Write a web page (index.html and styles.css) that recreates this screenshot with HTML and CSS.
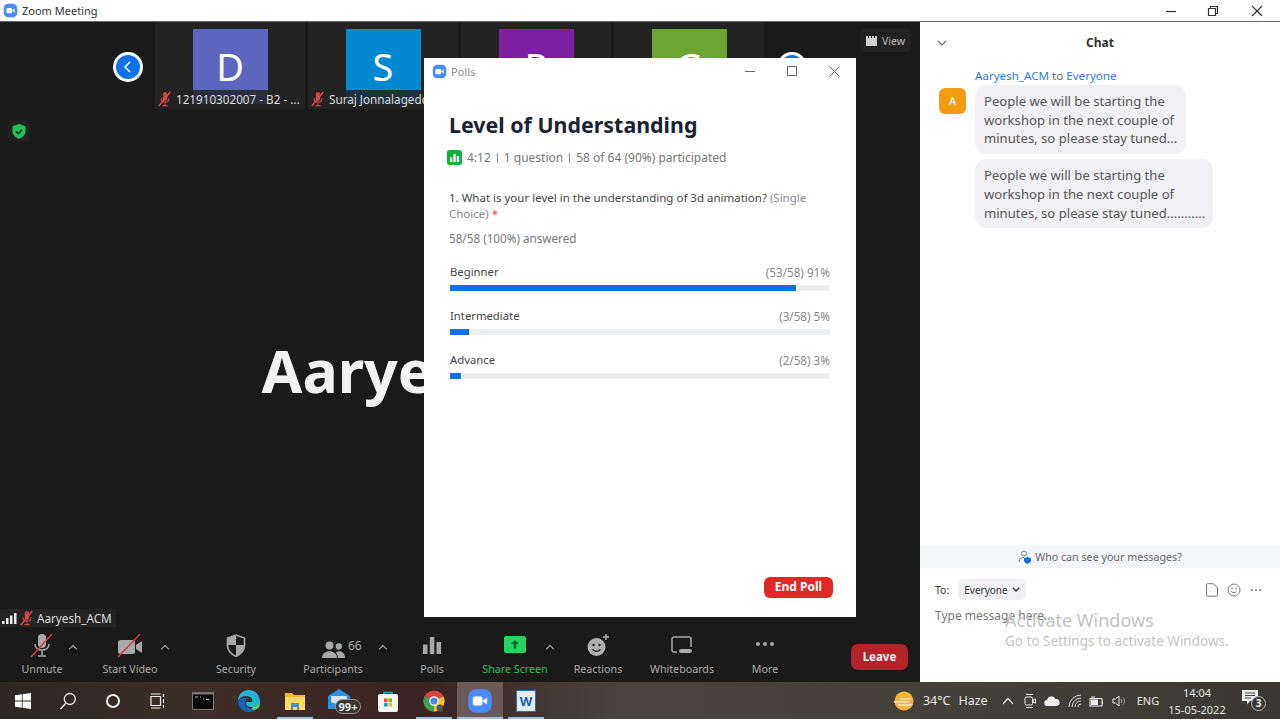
FILE: index.html
```html
<!DOCTYPE html>
<html lang="en">
<head>
  <meta charset="UTF-8">
  <title>Zoom Meeting</title>
  <link rel="stylesheet" href="styles.css">
</head>
<body>
  <svg class="defs" width="0" height="0">
    <symbol id="mutedmic" viewBox="0 0 16 18">
      <rect x="5.5" y="1" width="5" height="10" rx="2.5" fill="#c44"/>
      <path d="M3.5 8c0 6 9 6 9 0M8 13v3M5 16.5h6" fill="none" stroke="#c44" stroke-width="1.3"/>
      <path d="M1 17L14 1" stroke="#e5484d" stroke-width="1.5"/>
    </symbol>
    <symbol id="zoomlogo" viewBox="0 0 20 20">
      <rect x="1" y="1" width="18" height="18" rx="6" fill="#4a8cff"/>
      <rect x="4.5" y="6.5" width="7.5" height="7" rx="1.5" fill="#fff"/>
      <path d="M12.5 9.5l3-2.2v5.4l-3-2.2z" fill="#fff"/>
    </symbol>
  </svg>

  <div class="app">
    <div class="titlebar">
      <svg class="title-logo" width="15" height="15"><use href="#zoomlogo"/></svg>
      <span class="title-text">Zoom Meeting</span>
      <div class="win-controls">
        <svg width="42" height="20" viewBox="0 0 42 20"><path d="M16 10.500h10" stroke="#333" stroke-width="1.200"/></svg>
        <svg width="42" height="20" viewBox="0 0 42 20"><path d="M16.500 7.500h7v7h-7zM18.500 7.500v-2h7v7h-2" fill="none" stroke="#333" stroke-width="1.200"/></svg>
        <svg width="46" height="20" viewBox="0 0 46 20"><path d="M18 5l10 10M28 5l-10 10" stroke="#333" stroke-width="1.200"/></svg>
      </div>
    </div>

    <div class="main">
      <div class="meeting">
        <div class="stage">
          <div class="gallery">
            <div class="nav-btn"><svg width="14" height="14" viewBox="0 0 14 14"><path d="M9 2L4 7l5 5" fill="none" stroke="#fff" stroke-width="1.600"/></svg></div>
            <div class="tile">
              <div class="avatar av-blue">D</div>
              <div class="tile-label"><svg width="14" height="16"><use href="#mutedmic"/></svg><span>121910302007 - B2 - ...</span></div>
            </div>
            <div class="tile">
              <div class="avatar av-sky">S</div>
              <div class="tile-label"><svg width="14" height="16"><use href="#mutedmic"/></svg><span>Suraj Jonnalagedda</span></div>
            </div>
            <div class="tile">
              <div class="avatar av-purple">P</div>
            </div>
            <div class="tile">
              <div class="avatar av-green">G</div>
            </div>
            <div class="nav-btn nav-next"></div>
            <div class="view-btn">
              <svg width="11" height="10" viewBox="0 0 11 10"><path d="M0 0h2v2h1V0h2v2h1V0h2v2h1V0h2v10H0z" fill="#d0d0d0"/></svg>
              <span>View</span>
            </div>
          </div>

          <div class="speaker">Aaryesh_ACM</div>

          <div class="speaker-label">
            <svg width="15" height="11" viewBox="0 0 15 11"><path d="M0 8h2.500v3H0zM4 5h2.500v6H4zM8 2.500h2.500V11H8zM12 0h2.500v11H12z" fill="#eee"/></svg>
            <svg width="14" height="16"><use href="#mutedmic"/></svg>
            <span>Aaryesh_ACM</span>
          </div>

          <div class="secure-badge">
            <svg width="14" height="15" viewBox="0 0 14 15"><path d="M7 0l6.500 2.300v5c0 3.500-2.800 6.200-6.500 7.700C3.300 13.500.5 10.800.5 7.300v-5z" fill="#1fc257"/><path d="M4 7.500l2.200 2.200L10 5.800" fill="none" stroke="#123" stroke-width="1.500"/></svg>
          </div>
        </div>

        <div class="toolbar">
          <div class="tool tool-unmute">
            <svg width="28" height="26" viewBox="0 0 28 26">
              <rect x="10" y="1" width="8" height="14" rx="4" fill="#a8a8a8"/>
              <path d="M7 11c0 8 14 8 14 0M14 18v4M10 23h8" fill="none" stroke="#a8a8a8" stroke-width="1.600"/>
              <path d="M3 24L24 1" stroke="#c9403f" stroke-width="1.600"/>
            </svg>
            <span>Unmute</span>
            <i class="caret"></i>
          </div>
          <div class="tool tool-video">
            <svg width="28" height="26" viewBox="0 0 28 26">
              <rect x="2" y="7" width="17" height="14" rx="2.500" fill="#a8a8a8"/>
              <path d="M20 12l6-4v12l-6-4z" fill="#a8a8a8"/>
              <path d="M2 24L24 1" stroke="#c9403f" stroke-width="1.600"/>
            </svg>
            <span>Start Video</span>
            <i class="caret"></i>
          </div>
          <div class="tool tool-security">
            <svg width="28" height="26" viewBox="0 0 28 26">
              <path d="M14 2l8.500 3v7c0 5.500-3.500 9-8.500 11.500C9 21 5.500 17.500 5.500 12V5z" fill="none" stroke="#a8a8a8" stroke-width="1.600"/>
              <path d="M14 2v10H5.500V5zM14 12h8.500c0 5.500-3.500 9-8.500 11.500z" fill="#a8a8a8"/>
            </svg>
            <span>Security</span>
          </div>
          <div class="tool tool-people">
            <svg class="people-icon" width="23" height="18" viewBox="0 0 26 20">
              <circle cx="8.500" cy="5" r="4.500" fill="#a8a8a8"/>
              <circle cx="19" cy="6" r="3.500" fill="#a8a8a8"/>
              <path d="M0 19c0-10 17-10 17 0zM18 19c0-3-1-5-2.500-6.500C20 10 26 12 26 19z" fill="#a8a8a8"/>
            </svg>
            <b class="people-count">66</b>
            <span>Participants</span>
            <i class="caret"></i>
          </div>
          <div class="tool tool-polls">
            <svg width="28" height="26" viewBox="0 0 28 26">
              <path d="M5 11.500h4.500V21H5zM11.800 4h4.500v17h-4.500zM18.500 9h4.500v12h-4.500z" fill="#a8a8a8"/>
            </svg>
            <span>Polls</span>
          </div>
          <div class="tool tool-share">
            <svg width="28" height="26" viewBox="0 0 28 26">
              <rect x="3" y="3" width="22" height="17" rx="2" fill="#25d45f"/>
              <path d="M14 7l-4 4h2.700v4.500h2.600V11H18z" fill="#063"/>
            </svg>
            <span>Share Screen</span>
            <i class="caret"></i>
          </div>
          <div class="tool tool-reactions">
            <svg width="28" height="26" viewBox="0 0 28 26">
              <circle cx="12.500" cy="14" r="9" fill="#b0b0b0"/>
              <circle cx="9.500" cy="12" r="1.200" fill="#222"/><circle cx="15.500" cy="12" r="1.200" fill="#222"/>
              <path d="M8.500 16c1.500 3 6.500 3 8 0" fill="none" stroke="#222" stroke-width="1.300"/>
              <path d="M22 1v6M19 4h6" stroke="#b0b0b0" stroke-width="1.400"/>
            </svg>
            <span>Reactions</span>
          </div>
          <div class="tool tool-boards">
            <svg width="28" height="26" viewBox="0 0 28 26">
              <path d="M9 19H6a2 2 0 0 1-2-2V6a2 2 0 0 1 2-2h15a2 2 0 0 1 2 2v8" fill="none" stroke="#a8a8a8" stroke-width="1.500"/>
              <rect x="11" y="16" width="13" height="4" rx="2" fill="#a8a8a8"/>
            </svg>
            <span>Whiteboards</span>
          </div>
          <div class="tool tool-more">
            <svg width="28" height="26" viewBox="0 0 28 26">
              <circle cx="7" cy="11" r="2" fill="#a8a8a8"/><circle cx="14" cy="11" r="2" fill="#a8a8a8"/><circle cx="21" cy="11" r="2" fill="#a8a8a8"/>
            </svg>
            <span>More</span>
          </div>
          <div class="leave-btn">Leave</div>
        </div>
      </div>

      <div class="chat">
        <div class="chat-head">
          <svg class="chat-chevron" width="10" height="6" viewBox="0 0 10 6"><path d="M1 1l4 4 4-4" fill="none" stroke="#666" stroke-width="1.200"/></svg>
          <b>Chat</b>
        </div>
        <div class="chat-body">
          <div class="sender"><span class="blue">Aaryesh_ACM</span> to <span class="blue">Everyone</span></div>
          <div class="msg-row">
            <div class="chat-avatar">A</div>
            <div class="bubbles">
              <div class="bubble">People we will be starting the<br>workshop in the next couple of<br>minutes, so please stay tuned...</div>
              <div class="bubble">People we will be starting the<br>workshop in the next couple of<br>minutes, so please stay tuned...........</div>
            </div>
          </div>
        </div>
        <div class="who-can">
          <svg width="14" height="14" viewBox="0 0 14 14">
            <circle cx="6" cy="3.500" r="2.500" fill="none" stroke="#777"/>
            <path d="M1 12c0-3 2-4.500 5-4.500" fill="none" stroke="#777"/>
            <path d="M9.500 7l3.500 1.200v2.300c0 1.500-1.500 2.800-3.500 3.500C7.500 13.300 6 12 6 10.500V8.200z" fill="#0e71eb"/>
          </svg>
          <span>Who can see your messages?</span>
        </div>
        <div class="compose">
          <div class="to-row">
            <span class="to-label">To:</span>
            <div class="to-select">Everyone
              <svg width="8" height="5" viewBox="0 0 8 5"><path d="M.8.8L4 4 7.200.8" fill="none" stroke="#333" stroke-width="1.300"/></svg>
            </div>
            <div class="compose-icons">
              <svg width="12" height="14" viewBox="0 0 12 14"><path d="M1.500.7h6l4 4v7a1.500 1.500 0 0 1-1.500 1.500H2A1.500 1.500 0 0 1 .5 11.700V2A1.500 1.500 0 0 1 1.500.7z" fill="none" stroke="#777"/></svg>
              <svg width="14" height="14" viewBox="0 0 14 14"><circle cx="7" cy="7" r="6" fill="none" stroke="#777"/><circle cx="5" cy="5.800" r=".8" fill="#777"/><circle cx="9" cy="5.800" r=".8" fill="#777"/><path d="M4.500 8.500c1 1.500 4 1.500 5 0" fill="none" stroke="#777"/></svg>
              <svg width="12" height="14" viewBox="0 0 12 14"><circle cx="2" cy="7" r="1" fill="#777"/><circle cx="6" cy="7" r="1" fill="#777"/><circle cx="10" cy="7" r="1" fill="#777"/></svg>
            </div>
          </div>
          <div class="type-here">Type message here...</div>
        </div>
        <div class="watermark">
          <div class="wm-big">Activate Windows</div>
          <div class="wm-small">Go to Settings to activate Windows.</div>
        </div>
      </div>
    </div>

    <div class="taskbar">
      <div class="task-slot slot-sm">
        <svg width="16" height="16" viewBox="0 0 16 16"><path d="M0 2.300l6.800-1v6.300H0zM7.600 1.200L16 0v7.600H7.600zM0 8.400h6.800v6.300l-6.800-1zM7.600 8.400H16V16l-8.400-1.200z" fill="#fff"/></svg>
      </div>
      <div class="task-slot slot-sm">
        <svg width="18" height="18" viewBox="0 0 18 18"><circle cx="10.800" cy="7" r="5.500" fill="none" stroke="#eee" stroke-width="1.300"/><path d="M7 11L1.500 17" stroke="#eee" stroke-width="1.400"/></svg>
      </div>
      <div class="task-slot slot-sm">
        <svg width="16" height="16" viewBox="0 0 16 16"><circle cx="8" cy="8" r="6" fill="none" stroke="#eee" stroke-width="2"/></svg>
      </div>
      <div class="task-slot slot-sm">
        <svg width="16" height="16" viewBox="0 0 16 16"><path d="M1 3.500h9.500v9H1zM1 1h9.500M1 15h9.500M13.500 1v3M13.500 6v4M13.500 12v3" fill="none" stroke="#eee" stroke-width="1.200"/></svg>
      </div>
      <div class="task-slot">
        <svg width="22" height="18" viewBox="0 0 22 18"><rect width="22" height="18" fill="#777"/><rect x="1" y="2.500" width="20" height="14.500" fill="#0a0a0a"/><path d="M3 5h3M8 5h1M12 7l-1 .5M14 7.500h3" stroke="#bbb"/></svg>
      </div>
      <div class="task-slot">
        <svg width="24" height="24" viewBox="0 0 24 24">
          <path d="M23 13C23 6 18 1 12 1 5 1 1 6 1 12c2-5 8-6 12-4 2 1 3 3 2 5h-3c-2 0-3 0-3 1.500C9 17 12 18 15 18c5 0 8-2 8-5z" fill="#27b3d8"/>
          <path d="M1 12c0 6 5 11 11 11 3 0 6-1 8-4-2 1-5 1-8 0-4-1-5-5-3-8 1-1 2-2 3-2-5-1-9 0-11 3z" fill="#1462b8"/>
          <path d="M16 18c2 0 5-1 7-5 0 4-1 6-3 7-2 1-4 1-6 0z" fill="#5fd36a"/>
        </svg>
      </div>
      <div class="task-slot running">
        <svg width="20" height="18" viewBox="0 0 20 18"><path d="M0 1h7l2 2h11v15H0z" fill="#f1b82d"/><path d="M0 5h20v13H0z" fill="#ffd968"/><path d="M6 11h8v7h-2v-3H8v3H6z" fill="#3f8fd8"/></svg>
      </div>
      <div class="task-slot slot-mail">
        <div class="mail-icon">
          <svg width="22" height="20" viewBox="0 0 22 20"><path d="M0 7l11-7 11 7v13H0z" fill="#2a8fe0"/><path d="M3 7h16v6l-8 3-8-3z" fill="#cfe6f8"/></svg>
          <b class="mail-badge">99+</b>
        </div>
      </div>
      <div class="task-slot">
        <svg width="20" height="22" viewBox="0 0 20 22"><path d="M6 5V2.500h8V5" fill="none" stroke="#29a8d8" stroke-width="1.600"/><rect y="4" width="20" height="18" rx="2" fill="#f6f6f6"/><rect x="6" y="8.500" width="3.600" height="3.600" fill="#f25022"/><rect x="10.400" y="8.500" width="3.600" height="3.600" fill="#7fba00"/><rect x="6" y="12.900" width="3.600" height="3.600" fill="#00a4ef"/><rect x="10.400" y="12.900" width="3.600" height="3.600" fill="#ffb900"/></svg>
      </div>
      <div class="task-slot running">
        <svg width="22" height="22" viewBox="0 0 22 22">
          <circle cx="11" cy="11" r="10.500" fill="#d9463b"/>
          <path d="M11 11L20.500 6.500A10.500 10.500 0 0 1 11 21.500z" fill="#f5c02f"/>
          <path d="M11 11L11 21.500A10.500 10.500 0 0 1 1.500 6.500z" fill="#36a24e"/>
          <circle cx="11" cy="11" r="4.800" fill="#fff"/><circle cx="11" cy="11" r="3.600" fill="#4a87e8"/>
          <circle cx="17" cy="18" r="3.500" fill="#555"/>
        </svg>
      </div>
      <div class="task-slot running slot-active">
        <svg width="26" height="26"><use href="#zoomlogo"/></svg>
      </div>
      <div class="task-slot running">
        <div class="word-icon"><b>W</b></div>
      </div>

      <div class="tray">
        <div class="weather">
          <svg width="22" height="22" viewBox="0 0 22 22"><circle cx="11" cy="11" r="9.500" fill="#f6b632"/><path d="M1 12h15M5 15h14M7 9h11" stroke="#f1e6cf" stroke-width="1.300"/></svg>
          <span>34°C</span><span>Haze</span>
        </div>
        <div class="tray-slot"><svg width="12" height="8" viewBox="0 0 12 8"><path d="M1 7l5-5.500L11 7" fill="none" stroke="#eee" stroke-width="1.200"/></svg></div>
        <div class="tray-slot"><svg width="12" height="16" viewBox="0 0 12 16"><rect x="1" y="4" width="7.500" height="8" rx="1.500" fill="none" stroke="#eee"/><path d="M9 7l2.500-1.200v4.400L9 9zM2 1.500h7M2 14.500h7" fill="none" stroke="#eee"/></svg></div>
        <div class="tray-slot"><svg width="16" height="10" viewBox="0 0 16 10"><path d="M3.500 10a3 3 0 0 1-.5-6 4.500 4.500 0 0 1 8.500-1 3.500 3.500 0 0 1 1 7z" fill="#eee"/></svg></div>
        <div class="tray-slot"><svg width="14" height="14" viewBox="0 0 14 14"><path d="M1 13A12 12 0 0 1 13 1M4 13a9 9 0 0 1 9-9M7 13a6 6 0 0 1 6-6M10 13a3 3 0 0 1 3-3" fill="none" stroke="#ddd"/></svg></div>
        <div class="tray-slot"><svg width="15" height="12" viewBox="0 0 15 12"><rect x="1" y="3.500" width="12" height="7.500" fill="none" stroke="#eee"/><rect x="2" y="4.500" width="7" height="5.500" fill="#eee"/><path d="M13.500 6v3M2 2h4" stroke="#eee"/></svg></div>
        <div class="tray-slot"><svg width="14" height="12" viewBox="0 0 14 12"><path d="M1 4h2.500L7 1v10L3.500 8H1z" fill="none" stroke="#eee"/><path d="M9 4c1 1 1 3 0 4M11 2.500c2 2 2 5 0 7" fill="none" stroke="#aaa"/></svg></div>
        <div class="tray-lang">ENG</div>
        <div class="clock"><span>14:04</span><span>15-05-2022</span></div>
        <div class="notify">
          <svg width="16" height="15" viewBox="0 0 16 15"><path d="M0 0h16v11H8l-3 3.500V11H0z" fill="#eee"/><path d="M3 3h10M3 5.500h10M3 8h6" stroke="#444"/></svg>
          <b class="notify-count">3</b>
        </div>
      </div>
    </div>
  </div>

  <div class="poll-window">
    <div class="poll-title">
      <svg width="15" height="15"><use href="#zoomlogo"/></svg>
      <span>Polls</span>
      <div class="poll-controls">
        <svg width="10" height="10" viewBox="0 0 10 10"><path d="M0 5.500h10" stroke="#666"/></svg>
        <svg width="10" height="10" viewBox="0 0 10 10"><path d="M.5.500h9v9h-9z" fill="none" stroke="#666"/></svg>
        <svg width="11" height="11" viewBox="0 0 11 11"><path d="M.5.500l10 10M10.500.500l-10 10" stroke="#666"/></svg>
      </div>
    </div>
    <div class="poll-body">
      <h1>Level of Understanding</h1>
      <div class="poll-meta">
        <svg width="15" height="15" viewBox="0 0 15 15"><rect width="15" height="15" rx="2.500" fill="#12b33c"/><path d="M3 7.500h2.300V12H3zM6.400 4h2.300v8H6.400zM9.800 6h2.300v6H9.800z" fill="#fff"/></svg>
        <span>4:12</span><i></i><span>1 question</span><i></i><span>58 of 64 (90%) participated</span>
      </div>
      <p class="question"><span class="q-dark">1. What is your level in the understanding of 3d animation?</span> (Single<br>Choice) <span class="q-req">*</span></p>
      <p class="answered">58/58 (100%) answered</p>

      <div class="option">
        <div class="option-text"><span>Beginner</span><span class="option-count">(53/58) 91%</span></div>
        <div class="bar"><div class="bar-fill" style="width:91%"></div></div>
      </div>
      <div class="option">
        <div class="option-text"><span>Intermediate</span><span class="option-count">(3/58) 5%</span></div>
        <div class="bar"><div class="bar-fill" style="width:5%"></div></div>
      </div>
      <div class="option">
        <div class="option-text"><span>Advance</span><span class="option-count">(2/58) 3%</span></div>
        <div class="bar"><div class="bar-fill" style="width:3%"></div></div>
      </div>

      <div class="end-btn">End Poll</div>
    </div>
  </div>
</body>
</html>
```

FILE: styles.css
```css
* {
  box-sizing: border-box;
}
html, body {
  margin: 0;
  height: 719px;
  overflow: hidden;
}
body {
  position: relative;
  font-family: "Noto Sans", "Open Sans", sans-serif;
  font-size: 12px;
  color: #333;
}
.defs {
  position: absolute;
}
.app {
  display: flex;
  flex-direction: column;
  height: 719px;
}

/* title bar */
.titlebar {
  display: flex;
  align-items: center;
  height: 22px;
  padding-left: 3px;
  background: #fff;
  border-bottom: 1px solid #6a6a6a;
}
.title-text {
  margin-left: 4px;
  font-size: 11px;
  color: #333;
}
.win-controls {
  display: flex;
  margin-left: auto;
  margin-right: 0;
}

.main {
  display: flex;
  flex: 1;
  min-height: 0;
}

/* meeting side */
.meeting {
  display: flex;
  flex-direction: column;
  width: 920px;
  background: #1a1a1a;
}
.stage {
  position: relative;
  display: flex;
  flex-direction: column;
  flex: 1;
  min-height: 0;
}
.gallery {
  display: flex;
  align-items: stretch;
  height: 87px;
  padding-left: 113px;
}
.nav-btn {
  display: flex;
  align-items: center;
  justify-content: center;
  align-self: flex-start;
  width: 30px;
  height: 30px;
  margin-top: 30px;
  margin-right: 12px;
  border: 3px solid #fff;
  border-radius: 50%;
  background: #0e71eb;
}
.nav-next {
  margin-left: 10px;
  margin-right: 0;
}
.tile {
  position: relative;
  display: flex;
  justify-content: center;
  width: 150px;
  margin-right: 3px;
  padding-top: 7px;
  background: #232323;
}
.avatar {
  width: 75px;
  height: 75px;
  text-align: center;
  font-size: 38px;
  line-height: 75px;
  color: #fff;
}
.av-blue { background: #5b67bf; }
.av-sky { background: #0088d1; }
.av-purple { background: #7d1fa0; }
.av-green { background: #6ba532; }
.tile-label {
  position: absolute;
  left: 0;
  right: 0;
  top: 68px;
  display: flex;
  align-items: center;
  gap: 4px;
  height: 18px;
  padding-left: 3px;
  overflow: hidden;
  white-space: nowrap;
  font-size: 11.700px;
  color: #ddd;
  background: rgba(35, 35, 35, 0.85);
}
.view-btn {
  display: flex;
  align-items: center;
  gap: 5px;
  align-self: flex-start;
  height: 23px;
  margin-top: 7px;
  margin-left: 53px;
  padding: 0 6px;
  font-size: 10.500px;
  color: #bbb;
  background: #222;
  border-radius: 5px;
}
.speaker {
  display: flex;
  align-items: center;
  justify-content: center;
  flex: 1;
  padding-top: 22px;
  font-size: 59px;
  font-weight: 700;
  color: #f2f2f2;
}
.speaker-label {
  display: flex;
  align-items: center;
  gap: 3px;
  align-self: flex-start;
  height: 18px;
  margin-bottom: 3px;
  padding: 0 4px 0 2px;
  font-size: 11.700px;
  color: #ddd;
  background: #242424;
}
.secure-badge {
  position: absolute;
  left: 8px;
  top: 98px;
  display: flex;
  align-items: center;
  justify-content: center;
  width: 22px;
  height: 22px;
  border-radius: 5px;
  background: #222;
}

/* toolbar */
.toolbar {
  display: flex;
  align-items: flex-start;
  height: 52px;
  padding-left: 2px;
}
.tool {
  position: relative;
  display: flex;
  flex-direction: column;
  align-items: center;
  width: 80px;
  padding-top: 3px;
  font-size: 10.700px;
  color: #aaa;
  white-space: nowrap;
}
.tool > span {
  margin-top: 3px;
  line-height: 15px;
}
.tool-video { margin-left: 8px; }
.tool-security { margin-left: 26px; }
.tool-people { margin-left: 17px; }
.tool-polls { margin-left: 19px; }
.tool-share { margin-left: 3px; color: #25c45c; }
.tool-reactions { margin-left: 3px; }
.tool-boards { margin-left: 4px; }
.tool-more { margin-left: 3px; }
.caret {
  position: absolute;
  top: 16px;
  right: 6px;
  width: 6px;
  height: 6px;
  border-left: 1.200px solid #aaa;
  border-top: 1.200px solid #aaa;
  transform: rotate(45deg);
}
.tool-video .caret { right: 2px; }
.tool-people .caret { right: -13px; }
.tool-share .caret { right: 2px; }
.people-icon {
  margin: 8px 0 0 0;
  height: 18px;
}
.people-count {
  position: absolute;
  top: 7px;
  left: 55px;
  font-weight: 400;
  font-size: 12px;
}
.leave-btn {
  width: 57px;
  height: 26px;
  margin-top: 14px;
  margin-left: 46px;
  text-align: center;
  font-weight: 700;
  font-size: 11.500px;
  line-height: 26px;
  color: #f3f3f3;
  background: #b4232a;
  border-radius: 7px;
}

/* chat panel */
.chat {
  position: relative;
  display: flex;
  flex-direction: column;
  flex: 1;
  background: #fff;
}
.chat-head {
  position: relative;
  height: 41px;
  padding-top: 12px;
  text-align: center;
  font-size: 12px;
  color: #333;
}
.chat-chevron {
  position: absolute;
  left: 17px;
  top: 18px;
}
.chat-body {
  flex: 1;
  padding: 4px 0 0 19px;
}
.sender {
  margin-left: 36px;
  font-size: 11.600px;
  line-height: 18px;
  color: #666;
}
.blue {
  color: #2d7be0;
}
.msg-row {
  display: flex;
  gap: 9px;
}
.chat-avatar {
  width: 27px;
  height: 26px;
  margin-top: 3px;
  text-align: center;
  font-size: 11px;
  line-height: 25px;
  color: #fff;
  background: #f39c12;
  border-radius: 6px;
}
.bubbles {
  display: flex;
  flex-direction: column;
  align-items: flex-start;
  gap: 5px;
}
.bubble {
  padding: 7px 9px 6px;
  font-size: 13.100px;
  line-height: 18.700px;
  color: #555;
  background: #f1f1f5;
  border-radius: 11px;
}
.bubble + .bubble {
  padding-right: 8px;
}
.who-can {
  display: flex;
  align-items: center;
  justify-content: center;
  gap: 3px;
  height: 23px;
  font-size: 10.700px;
  color: #666;
  background: #f4f5f9;
}
.compose {
  height: 114px;
  padding: 11px 15px 0 15px;
}
.to-row {
  display: flex;
  align-items: center;
  gap: 9px;
}
.to-label {
  font-size: 10.500px;
  color: #333;
}
.to-select {
  display: flex;
  align-items: center;
  gap: 4px;
  height: 21px;
  padding: 0 6px;
  font-size: 10px;
  color: #333;
  background: #f1f1f5;
  border-radius: 5px;
}
.compose-icons {
  display: flex;
  align-items: center;
  gap: 9px;
  margin-left: auto;
  padding-right: 3px;
}
.type-here {
  margin-top: 7px;
  font-size: 12px;
  color: #777;
}
.watermark {
  position: absolute;
  left: 85px;
  bottom: 32px;
  color: #c4c4c4;
  white-space: nowrap;
}
.wm-big {
  font-size: 18px;
  line-height: 24px;
}
.wm-small {
  font-size: 13.500px;
  line-height: 18px;
}

/* taskbar */
.taskbar {
  display: flex;
  height: 37px;
  background: linear-gradient(90deg, #2b2723 0, #3d2f27 200px, #3a2322 420px, #4a443e 620px, #45413b 900px, #3b3833 1280px);
}
.task-slot {
  position: relative;
  display: flex;
  align-items: center;
  justify-content: center;
  width: 46px;
}
.slot-sm {
  width: 45px;
}
.slot-mail {
  width: 47px;
}
.running::after {
  content: "";
  position: absolute;
  left: 5px;
  right: 5px;
  bottom: 0;
  height: 2px;
  background: #8ec5ef;
}
.slot-active {
  background: #6b5a55;
}
.slot-active::after {
  left: 0;
  right: 0;
}
.mail-icon {
  position: relative;
  width: 30px;
  height: 24px;
  margin-left: 3px;
}
.mail-badge {
  position: absolute;
  left: 7px;
  top: 10px;
  width: 26px;
  height: 15px;
  text-align: center;
  font-size: 11px;
  line-height: 14px;
  color: #eee;
  background: #3a3430;
  border: 1px solid #999;
  border-radius: 8px;
}
.word-icon {
  width: 20px;
  height: 22px;
  text-align: center;
  font-size: 13px;
  line-height: 20px;
  color: #1d5fb0;
  background: #e4eefa;
  border: 1px solid #2b6cc0;
}
.tray {
  display: flex;
  align-items: center;
  margin-left: auto;
  padding-right: 8px;
  font-size: 12px;
  color: #e8e8e8;
}
.weather {
  display: flex;
  align-items: center;
  gap: 8px;
  width: 104px;
  font-size: 12.500px;
}
.tray-slot {
  display: flex;
  align-items: center;
  justify-content: center;
  width: 22.200px;
}
.tray-lang {
  width: 36px;
  text-align: center;
  font-size: 11px;
}
.clock {
  display: flex;
  flex-direction: column;
  align-items: center;
  width: 62px;
  font-size: 11px;
  line-height: 17px;
}
.notify {
  position: relative;
  display: flex;
  justify-content: center;
  width: 44px;
  margin-top: -6px;
}
.notify-count {
  position: absolute;
  left: 23px;
  top: 6px;
  width: 15px;
  height: 15px;
  text-align: center;
  font-size: 10px;
  line-height: 13px;
  background: #3b3833;
  border: 1px solid #bbb;
  border-radius: 50%;
}

/* polls popup */
.poll-window {
  position: absolute;
  left: 424px;
  top: 58px;
  display: flex;
  flex-direction: column;
  width: 432px;
  height: 559px;
  background: #fff;
}
.poll-title {
  display: flex;
  align-items: center;
  gap: 4px;
  height: 26px;
  padding: 0 16px 0 8px;
  font-size: 11px;
  color: #888;
}
.poll-controls {
  display: flex;
  align-items: center;
  gap: 32px;
  margin-left: auto;
}
.poll-body {
  display: flex;
  flex-direction: column;
  flex: 1;
  padding: 26px 26px 19px 25px;
}
.poll-body h1 {
  margin: 0;
  font-size: 21.400px;
  line-height: 30px;
  color: #1c2233;
}
.poll-meta {
  display: flex;
  align-items: center;
  gap: 6px;
  margin-top: 9px;
  font-size: 12px;
  color: #777;
}
.poll-meta svg {
  margin-left: -2px;
  margin-right: -1px;
}
.poll-meta i {
  width: 1px;
  height: 10px;
  background: #888;
}
.question {
  margin: 24px 0 0;
  font-size: 11.500px;
  line-height: 16px;
  color: #888;
}
.q-dark {
  color: #444;
}
.q-req {
  color: #e5484d;
}
.answered {
  margin: 8px 0 17px;
  font-size: 11.700px;
  line-height: 16px;
  color: #777;
}
.option {
  margin-bottom: 16px;
  margin-left: 1px;
}
.option-text {
  display: flex;
  justify-content: space-between;
  font-size: 11.300px;
  line-height: 18px;
  color: #444;
}
.option-count {
  color: #888;
  font-size: 11.700px;
}
.bar {
  height: 6px;
  margin-top: 4px;
  background: #edeef2;
}
.bar-fill {
  height: 6px;
  background: #0e71eb;
}
.end-btn {
  align-self: flex-end;
  width: 69px;
  height: 21px;
  margin-top: auto;
  margin-right: -3px;
  text-align: center;
  font-weight: 700;
  font-size: 12px;
  line-height: 20px;
  color: #fff;
  background: #e02828;
  border-radius: 6px;
}
```
